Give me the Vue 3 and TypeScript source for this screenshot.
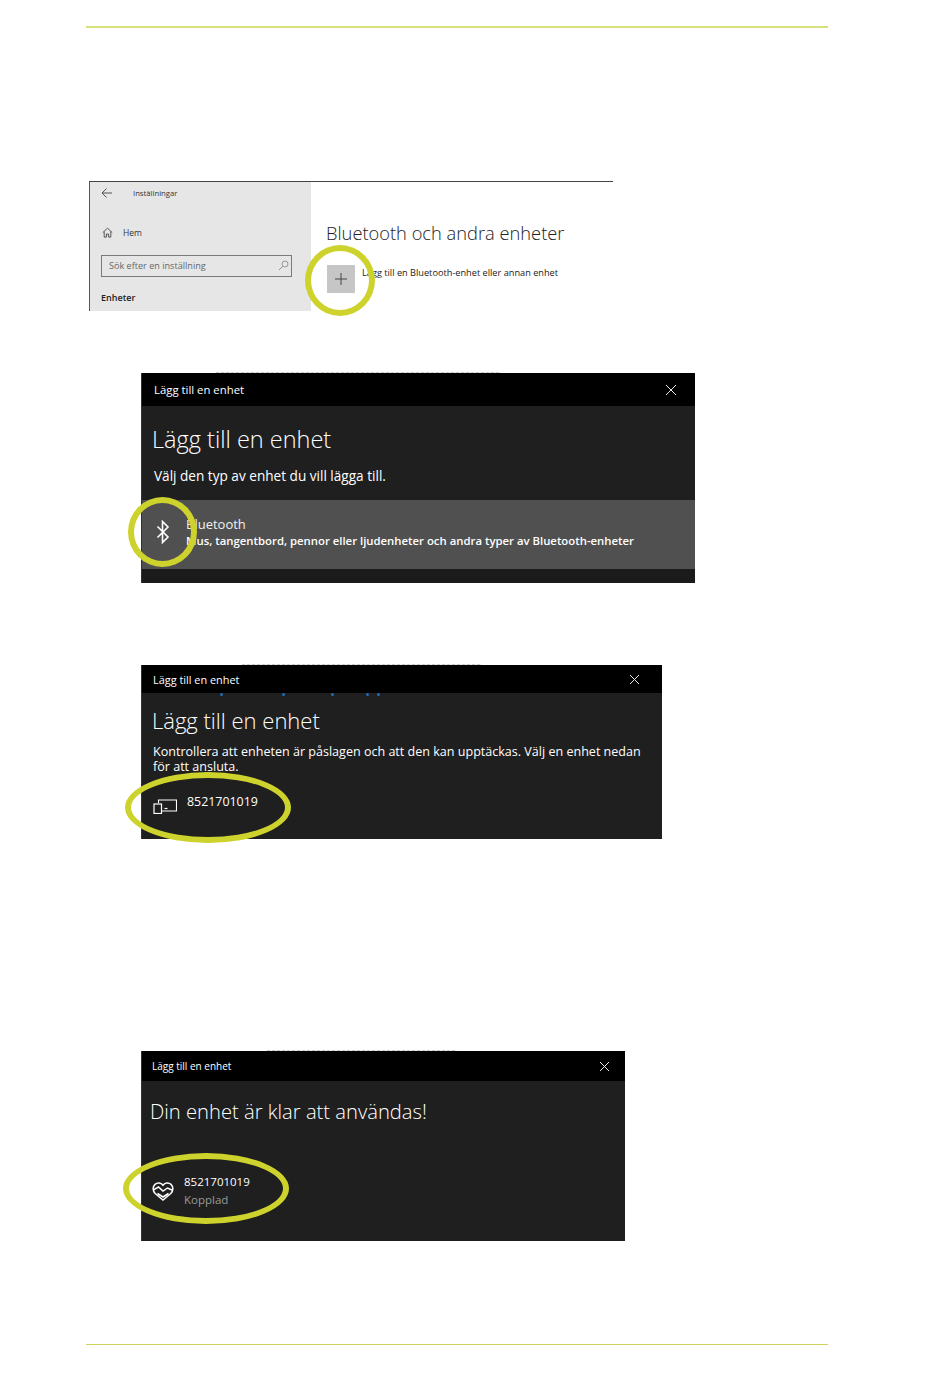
<script setup lang="ts">
const title = 'Lägg till en enhet'
const deviceId = '8521701019'
const scanDots = [78, 140, 189, 224, 235]
</script>

<template>
  <div class="page">
    <div class="rule"></div>

    <!-- steg 1: inställningar -->
    <section class="shot settings">
      <div class="side">
        <div class="side-top">
          <svg class="ico-back" width="12" height="12" viewBox="0 0 12 12">
            <path d="M5.500 1.500 1 6l4.500 4.500M1 6h10" fill="none" stroke="#444" stroke-width="0.9" />
          </svg>
          <span class="app-name">Inställningar</span>
        </div>
        <div class="side-home">
          <svg width="11" height="11" viewBox="0 0 11 11">
            <path d="M.8 5.600 5.500 1.200l4.700 4.400M2.200 4.600v5.500h2.200V7h2.200v3.100h2.200V4.600" fill="none" stroke="#333" stroke-width="0.8" />
          </svg>
          <span>Hem</span>
        </div>
        <div class="search">
          <span>Sök efter en inställning</span>
          <svg width="11" height="11" viewBox="0 0 11 11">
            <circle cx="7" cy="4" r="3" fill="none" stroke="#888" stroke-width="0.8" />
            <path d="M4.800 6.200 1 10" stroke="#888" stroke-width="0.9" />
          </svg>
        </div>
        <div class="side-section">Enheter</div>
      </div>
      <div class="main">
        <h2>Bluetooth och andra enheter</h2>
        <div class="add-row">
          <div class="add-btn">
            <svg width="12" height="12" viewBox="0 0 12 12">
              <path d="M6 0v12M0 6h12" stroke="#444" stroke-width="1" />
            </svg>
          </div>
          <span>Lägg till en Bluetooth-enhet eller annan enhet</span>
        </div>
      </div>
      <div class="ring ring-plus"></div>
    </section>

    <!-- steg 2: välj typ -->
    <section class="shot dialog pick">
      <div class="crop-marks"></div>
      <header class="bar">
        <span>{{ title }}</span>
        <svg width="12" height="12" viewBox="0 0 12 12">
          <path d="M1 1l10 10M11 1 1 11" stroke="#e8e8e8" stroke-width="1" />
        </svg>
      </header>
      <div class="body">
        <h2>{{ title }}</h2>
        <p>Välj den typ av enhet du vill lägga till.</p>
      </div>
      <div class="bt-row">
        <svg width="14" height="24" viewBox="0 0 14 24">
          <path d="M1.500 6.500 12 17l-5.500 5.500v-21L12 7 1.500 17.500" fill="none" stroke="#fff" stroke-width="1.600" />
        </svg>
        <div class="bt-text">
          <div class="bt-name">Bluetooth</div>
          <div class="bt-desc">Mus, tangentbord, pennor eller ljudenheter och andra typer av Bluetooth-enheter</div>
        </div>
      </div>
      <div class="ring ring-bt"></div>
    </section>

    <!-- steg 3: välj enhet -->
    <section class="shot dialog found">
      <div class="crop-marks"></div>
      <header class="bar">
        <span>{{ title }}</span>
        <svg width="11" height="11" viewBox="0 0 11 11">
          <path d="M1 1l9 9M10 1l-9 9" stroke="#e8e8e8" stroke-width="1" />
        </svg>
      </header>
      <div class="dots">
        <i v-for="d in scanDots" :key="d" :style="{ left: d + 'px' }"></i>
      </div>
      <div class="body">
        <h2>{{ title }}</h2>
        <p>Kontrollera att enheten är påslagen och att den kan upptäckas. Välj en enhet nedan för att ansluta.</p>
      </div>
      <div class="device">
        <svg width="24" height="15" viewBox="0 0 24 15">
          <path d="M5.500 4V1h18v11H9" fill="none" stroke="#fff" stroke-width="1.100" />
          <rect x="1" y="5" width="7.500" height="9.500" fill="none" stroke="#fff" stroke-width="1.200" />
          <path d="M11.500 9.500h3" stroke="#fff" stroke-width="1.200" />
        </svg>
        <span>{{ deviceId }}</span>
      </div>
      <div class="ring ring-found"></div>
    </section>

    <!-- steg 4: klar -->
    <section class="shot dialog ready">
      <div class="crop-marks"></div>
      <header class="bar">
        <span>{{ title }}</span>
        <svg width="11" height="11" viewBox="0 0 11 11">
          <path d="M1 1l9 9M10 1l-9 9" stroke="#e8e8e8" stroke-width="1" />
        </svg>
      </header>
      <div class="body">
        <h2>Din enhet är klar att användas!</h2>
      </div>
      <div class="paired">
        <svg width="22" height="20" viewBox="0 0 22 20">
          <path d="M3.200 12.500C.4 9.600.6 5.600 3 3.400c2.500-2.200 6-1.700 8 .9 2-2.600 5.500-3.100 8-.9 2.400 2.200 2.600 6.200-.2 9.100L11 19z" fill="none" stroke="#fff" stroke-width="1.500" />
          <path d="M1.500 8.800 6.500 6l4.500 4 4.500-3 5 2.200M5.500 12.500l5.500 3.500 5.500-3.500" fill="none" stroke="#fff" stroke-width="1.500" />
        </svg>
        <div>
          <div class="paired-id">{{ deviceId }}</div>
          <div class="paired-state">Kopplad</div>
        </div>
      </div>
      <div class="ring ring-ready"></div>
    </section>

    <div class="rule rule-bottom"></div>
  </div>
</template>

<style>
html,
body {
  margin: 0;
  background: #fff;
}
</style>

<style scoped>
.page {
  width: 950px;
  height: 1391px;
  padding-top: 26px;
  box-sizing: border-box;
  background: #fff;
  font-family: "Open Sans", "Noto Sans", "Liberation Sans", sans-serif;
  overflow: hidden;
}

.rule {
  width: 742px;
  height: 2px;
  margin-left: 86px;
  background: #d8e07c;
}

.rule-bottom {
  height: 1px;
  margin-top: 103px;
  background: #cdd35c;
}

.shot {
  position: relative;
  box-sizing: border-box;
}

.ring {
  position: absolute;
  box-sizing: border-box;
  border: 6px solid #cdd32c;
  border-radius: 50%;
}

/* steg 1 */
.settings {
  display: flex;
  width: 524px;
  height: 130px;
  margin: 153px 0 0 89px;
  border-top: 1px solid #444;
}

.side {
  width: 222px;
  box-sizing: border-box;
  padding: 5px 19px 0 11px;
  background: #e6e6e6;
  border-left: 1px solid #555;
  color: #222;
}

.side-top {
  display: flex;
  align-items: center;
  gap: 20px;
  font-size: 7.700px;
}

.app-name {
  color: #333;
}

.side-home {
  display: flex;
  align-items: center;
  gap: 10px;
  margin: 28px 0 0 1px;
  font-size: 8.500px;
  color: #333;
}

.search {
  display: flex;
  align-items: center;
  justify-content: space-between;
  width: 191px;
  height: 22px;
  box-sizing: border-box;
  margin-top: 17px;
  padding: 0 2px 2px 7px;
  border: 1px solid #7a7a7a;
  font-size: 9.100px;
  color: #666;
}

.side-section {
  margin-top: 14px;
  font-size: 9px;
  font-weight: 600;
  color: #222;
}

.main {
  flex: 1;
  padding: 38px 0 0 15px;
  background: #fff;
}

.main h2 {
  margin: 0;
  font-size: 18.300px;
  line-height: 26px;
  font-weight: 300;
  color: #222;
  white-space: nowrap;
}

.add-row {
  display: flex;
  align-items: flex-start;
  gap: 7px;
  margin-top: 19px;
  margin-left: 1px;
  font-size: 9.200px;
  color: #222;
  white-space: nowrap;
}

.add-row span {
  margin-top: 1px;
}

.add-btn {
  display: flex;
  align-items: center;
  justify-content: center;
  width: 28px;
  height: 28px;
  background: #c6c6c6;
}

.ring-plus {
  left: 216px;
  top: 63px;
  width: 70px;
  height: 71px;
}

/* dialogs */
.dialog {
  margin-left: 141px;
  background: #1f1f1f;
  color: #fff;
  border-left: 1px solid #333;
}

.crop-marks {
  position: absolute;
  top: -1px;
  height: 1px;
  background: repeating-linear-gradient(90deg, #c8c8c8 0 3px, #f0f0f0 3px 5px);
}

.bar {
  display: flex;
  align-items: center;
  justify-content: space-between;
  background: #000;
  font-size: 11.350px;
}

.body h2 {
  margin: 0;
  font-weight: 300;
  white-space: nowrap;
}

.body p {
  margin: 0;
}

.pick {
  width: 554px;
  height: 210px;
  margin-top: 62px;
  background: #1b1b1b;
}

.pick .crop-marks {
  left: 74px;
  width: 285px;
}

.pick .bar {
  height: 33px;
  padding: 0 18px 0 12px;
}

.pick .body {
  height: 94px;
  box-sizing: border-box;
  padding: 15px 0 0 10px;
  background: #1f1f1f;
}

.pick .body h2 {
  font-size: 23.500px;
  line-height: 36px;
}

.pick .body p {
  margin: 10px 0 0 2px;
  font-size: 13.600px;
  line-height: 18px;
}

.bt-row {
  display: flex;
  align-items: center;
  gap: 16px;
  height: 69px;
  padding-left: 14px;
  background: #505050;
}

.bt-row svg {
  margin-top: -6px;
}

.bt-text {
  margin-top: -6px;
}

.bt-name {
  font-size: 13px;
  line-height: 18px;
  color: #f0f0f0;
}

.bt-desc {
  font-size: 11.350px;
  line-height: 16px;
  font-weight: 600;
  white-space: nowrap;
}

.ring-bt {
  left: -14px;
  top: 124px;
  width: 69px;
  height: 70px;
}

.found {
  width: 521px;
  height: 174px;
  margin-top: 82px;
}

.found .crop-marks {
  left: 100px;
  width: 240px;
}

.found .bar {
  height: 28px;
  padding: 0 22px 0 11px;
  font-size: 10.900px;
}

.dots {
  position: relative;
  height: 2px;
}

.dots i {
  position: absolute;
  top: 0;
  width: 3px;
  height: 3px;
  border-radius: 50%;
  background: #1f6fb5;
}

.found .body {
  padding: 12px 10px 0 11px;
}

.found .body h2 {
  margin-left: -1px;
  font-size: 22px;
  line-height: 26px;
}

.found .body p {
  margin-top: 11px;
  font-size: 12.550px;
  line-height: 15px;
}

.device {
  display: flex;
  align-items: flex-start;
  gap: 10px;
  margin: 20px 0 0 11px;
  font-size: 12.400px;
  line-height: 16px;
}

.device svg {
  margin-top: 5px;
}

.ring-found {
  left: -17px;
  top: 107px;
  width: 166px;
  height: 71px;
}

.ready {
  width: 484px;
  height: 190px;
  margin-top: 212px;
}

.ready .crop-marks {
  left: 125px;
  width: 190px;
}

.ready .bar {
  height: 30px;
  padding: 0 15px 0 10px;
  font-size: 10px;
}

.ready .body {
  padding: 16px 0 0 8px;
}

.ready .body h2 {
  font-size: 20.200px;
  line-height: 28px;
}

.paired {
  display: flex;
  align-items: center;
  gap: 10px;
  margin: 48px 0 0 10px;
  font-size: 11.500px;
  line-height: 18px;
}

.paired-state {
  color: #9a9a9a;
}

.ring-ready {
  left: -19px;
  top: 102px;
  width: 166px;
  height: 71px;
}
</style>
